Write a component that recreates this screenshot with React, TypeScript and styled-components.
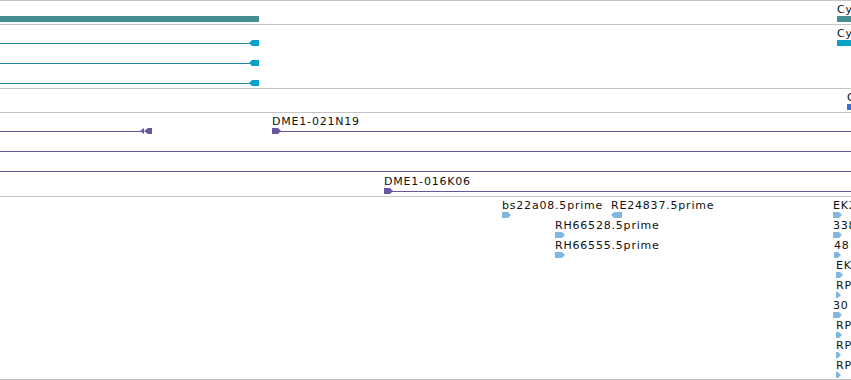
import { FC } from 'react';
import styled, { createGlobalStyle } from 'styled-components';

const GlobalStyle = createGlobalStyle`
  html, body {
    margin: 0;
    padding: 0;
    background: #fff;
  }
  body {
    font-family: 'DejaVu Sans', 'Liberation Sans', sans-serif;
  }
`;

const TEAL = '#448f8f';
const CYAN_LINE = '#1f8aa8';
const CYAN = '#06a2c6';
const ROYAL = '#3c6fd6';
const PURPLE = '#6a55a2';
const EST = '#82b6de';
const RULE = '#c4c4c4';

const Panel = styled.div`
  width: 851px;
  height: 380px;
  overflow: hidden;
  background: #fff;
`;

const Track = styled.div<{ $height: number }>`
  position: relative;
  box-sizing: border-box;
  height: ${({ $height }) => $height}px;
  border-top: 1px solid ${RULE};
`;

const BottomRule = styled.div`
  height: 0;
  border-top: 1px solid ${RULE};
`;

// feature rows are 20px apart, first one 4px below the rule
const Feature = styled.div<{ $x: number; $row: number }>`
  position: absolute;
  left: ${({ $x }) => $x}px;
  top: ${({ $row }) => 3 + $row * 20}px;
  display: flex;
  flex-direction: column;
  gap: 1px;
`;

const Label = styled.span`
  display: block;
  height: 11px;
  font-size: 11px;
  line-height: 11px;
  letter-spacing: 0.8px;
  color: #111;
  white-space: nowrap;
`;

const Block = styled.div<{ $w: number; $color: string }>`
  width: ${({ $w }) => $w}px;
  height: 6px;
  background: ${({ $color }) => $color};
`;

const Line = styled.div<{ $x: number; $w: number; $row: number; $color: string }>`
  position: absolute;
  left: ${({ $x }) => $x}px;
  width: ${({ $w }) => $w}px;
  top: ${({ $row }) => 18 + $row * 20}px;
  height: 1px;
  background: ${({ $color }) => $color};
`;

const GlyphSvg = styled.svg`
  display: block;
`;

type Dir = 'left' | 'right' | 'double';

const Arrow: FC<{ w: number; color: string; dir: Dir }> = ({ w, color, dir }) => {
  let points = '';
  if (dir === 'right') points = `0,0 ${w - 3},0 ${w},3 ${w - 3},6 0,6`;
  if (dir === 'left') points = `0,3 3,0 ${w},0 ${w},6 3,6`;
  return (
    <GlyphSvg width={w} height={6} viewBox={`0 0 ${w} 6`}>
      {dir === 'double' ? (
        <>
          <polygon points="0,3 4,0 4,6" fill={color} />
          <polygon points="4,3 8,0 8,6" fill={color} />
          <rect x={8} y={0} width={w - 8} height={6} fill={color} />
        </>
      ) : (
        <polygon points={points} fill={color} />
      )}
    </GlyphSvg>
  );
};

interface Est {
  name: string;
  x: number;
  row: number;
  w?: number;
  dir?: Dir;
}

const ests: Est[] = [
  { name: 'bs22a08.5prime', x: 502, row: 0 },
  { name: 'RE24837.5prime', x: 611, row: 0, w: 11, dir: 'left' },
  { name: 'EK2', x: 833, row: 0 },
  { name: 'RH66528.5prime', x: 555, row: 1, w: 10 },
  { name: '338', x: 833, row: 1 },
  { name: 'RH66555.5prime', x: 555, row: 2, w: 10 },
  { name: '48', x: 834, row: 2, w: 7 },
  { name: 'EK', x: 836, row: 3, w: 7 },
  { name: 'RP', x: 836, row: 4, w: 5 },
  { name: '30', x: 833, row: 5 },
  { name: 'RP', x: 836, row: 6, w: 6 },
  { name: 'RP', x: 836, row: 7, w: 5 },
  { name: 'RP', x: 836, row: 8, w: 5 },
];

export default function App() {
  return (
    <>
      <GlobalStyle />
      <Panel>
        <Track $height={24}>
          <Feature $x={0} $row={0}>
            <Label />
            <Block $w={259} $color={TEAL} />
          </Feature>
          <Feature $x={837} $row={0}>
            <Label>Cy</Label>
            <Block $w={20} $color={TEAL} />
          </Feature>
        </Track>

        <Track $height={64}>
          {[0, 1, 2].map((row) => (
            <div key={row}>
              <Line $x={0} $w={250} $row={row} $color={CYAN_LINE} />
              <Feature $x={249} $row={row}>
                <Label />
                <Arrow w={10} color={CYAN} dir="left" />
              </Feature>
            </div>
          ))}
          <Feature $x={837} $row={0}>
            <Label>Cy</Label>
            <Block $w={20} $color={CYAN} />
          </Feature>
        </Track>

        <Track $height={24}>
          <Feature $x={847} $row={0}>
            <Label>C</Label>
            <Block $w={10} $color={ROYAL} />
          </Feature>
        </Track>

        <Track $height={84}>
          <Line $x={0} $w={141} $row={0} $color={PURPLE} />
          <Feature $x={140} $row={0}>
            <Label />
            <Arrow w={12} color={PURPLE} dir="double" />
          </Feature>
          <Line $x={279} $w={580} $row={0} $color={PURPLE} />
          <Feature $x={272} $row={0}>
            <Label>DME1-021N19</Label>
            <Arrow w={9} color={PURPLE} dir="right" />
          </Feature>
          <Line $x={0} $w={851} $row={1} $color={PURPLE} />
          <Line $x={0} $w={851} $row={2} $color={PURPLE} />
          <Line $x={391} $w={470} $row={3} $color={PURPLE} />
          <Feature $x={384} $row={3}>
            <Label>DME1-016K06</Label>
            <Arrow w={9} color={PURPLE} dir="right" />
          </Feature>
        </Track>

        <Track $height={183}>
          {ests.map((e) => (
            <Feature key={`${e.name}-${e.row}`} $x={e.x} $row={e.row}>
              <Label>{e.name}</Label>
              <Arrow w={e.w ?? 9} color={EST} dir={e.dir ?? 'right'} />
            </Feature>
          ))}
        </Track>
        <BottomRule />
      </Panel>
    </>
  );
}
